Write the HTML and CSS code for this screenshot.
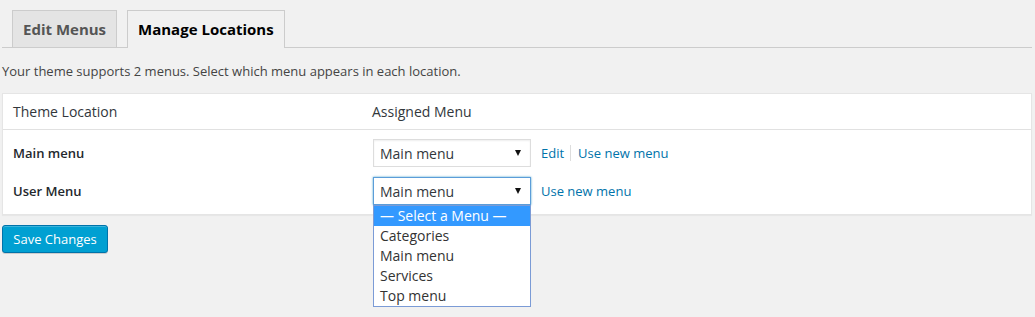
FILE: index.html
```html
<!DOCTYPE html>
<html>
<head>
<meta charset="utf-8">
<link rel="stylesheet" href="styles.css">
</head>
<body>
<div class="wrap">
  <div class="tabs">
    <a class="tab">Edit Menus</a>
    <a class="tab active">Manage Locations</a>
  </div>
  <p class="desc">Your theme supports 2 menus. Select which menu appears in each location.</p>
  <div class="table">
    <div class="thead">
      <div class="th col1">Theme Location</div>
      <div class="th">Assigned Menu</div>
    </div>
    <div class="tbody">
      <div class="row">
        <div class="label col1">Main menu</div>
        <div class="cell">
          <div class="select"><span>Main menu</span><span class="arrow"></span></div>
          <div class="links"><a>Edit</a><span class="sep"></span><a>Use new menu</a></div>
        </div>
      </div>
      <div class="row">
        <div class="label col1">User Menu</div>
        <div class="cell">
          <div class="select-wrap">
            <div class="select focus"><span>Main menu</span><span class="arrow"></span></div>
            <div class="dropdown">
              <div class="opt selected">— Select a Menu —</div>
              <div class="opt">Categories</div>
              <div class="opt">Main menu</div>
              <div class="opt">Services</div>
              <div class="opt">Top menu</div>
            </div>
          </div>
          <div class="links"><a>Use new menu</a></div>
        </div>
      </div>
    </div>
  </div>
  <div class="actions">
    <button class="btn">Save Changes</button>
  </div>
</div>
</body>
</html>
```
FILE: styles.css
```css
html, body {
  margin: 0;
  padding: 0;
  background: #f1f1f1;
  font-family: "Open Sans", "Liberation Sans", sans-serif;
  color: #444;
  font-size: 13px;
}
.wrap {
  margin: 0 3px 0 2px;
  padding-top: 10px;
  min-height: 307px;
}
.tabs {
  display: flex;
  gap: 10px;
  padding-left: 10px;
  border-bottom: 1px solid #ccc;
  height: 37px;
}
.tab {
  display: block;
  box-sizing: border-box;
  height: 38px;
  border: 1px solid #ccc;
  border-bottom: none;
  padding: 0 10px;
  font-size: 15px;
  font-weight: 700;
  line-height: 37px;
  color: #555;
  background: #e4e4e4;
  white-space: nowrap;
}
.tab:first-child {
  height: 37px;
}
.tab.active {
  background: #f1f1f1;
  color: #000;
  padding: 0 10px;
}
.desc {
  margin: 13px 0 12px;
  line-height: 20px;
  font-size: 13px;
  color: #444;
}
.table {
  background: #fff;
  border: 1px solid #e5e5e5;
  box-shadow: 0 1px 1px rgba(0,0,0,.04);
  position: relative;
  z-index: 2;
}
.thead {
  display: flex;
  height: 35px;
  align-items: center;
  border-bottom: 1px solid #e1e1e1;
}
.th {
  font-size: 14px;
  color: #32373c;
  padding-left: 10px;
}
.col1 {
  width: 359px;
  flex: none;
}
.th + .th {
  padding-left: 0;
}
.tbody {
  padding: 9px 0 9px;
  display: flex;
  flex-direction: column;
  gap: 10px;
}
.row {
  display: flex;
  align-items: center;
  height: 28px;
}
.label {
  font-weight: 600;
  font-size: 13px;
  color: #23282d;
  padding-left: 10px;
}
.cell {
  display: flex;
  align-items: center;
  gap: 10px;
  margin-left: 1px;
}
.select-wrap {
  position: relative;
}
.select {
  box-sizing: border-box;
  width: 158px;
  height: 28px;
  border: 1px solid #ddd;
  box-shadow: inset 0 1px 2px rgba(0,0,0,.07);
  background: #fff;
  display: flex;
  align-items: center;
  justify-content: space-between;
  padding: 0 9px 0 6px;
  font-size: 14px;
  color: #32373c;
}
.select.focus {
  border-color: #5b9dd9;
  box-shadow: 0 0 2px rgba(30,140,190,.8);
}
.arrow {
  width: 0;
  height: 0;
  border-left: 3.5px solid transparent;
  border-right: 3.5px solid transparent;
  border-top: 6px solid #111;
  margin-top: -1px;
}
.links {
  display: flex;
  align-items: center;
  font-size: 13px;
}
.links a {
  color: #0073aa;
}
.sep {
  width: 1px;
  height: 16px;
  background: #ddd;
  margin: 0 7px 0 6px;
}
.dropdown {
  position: absolute;
  top: 28px;
  left: 0;
  box-sizing: border-box;
  width: 158px;
  background: #fff;
  border: 1px solid #7b9bd6;
  z-index: 10;
}
.opt {
  height: 20px;
  line-height: 20px;
  padding-left: 6px;
  font-size: 14px;
  color: #333;
}
.opt.selected {
  background: #3399ff;
  color: #fff;
}
.actions {
  margin-top: 10px;
}
.btn {
  box-sizing: border-box;
  height: 28px;
  width: 106px;
  padding: 0 0 1px;
  border: 1px solid #0073aa;
  border-radius: 3px;
  background: #00a0d2;
  color: #fff;
  font-family: "Open Sans", "Liberation Sans", sans-serif;
  font-size: 13px;
  line-height: 26px;
  box-shadow: inset 0 1px 0 rgba(120,200,230,.5), 0 1px 0 rgba(0,0,0,.15);
}
```
